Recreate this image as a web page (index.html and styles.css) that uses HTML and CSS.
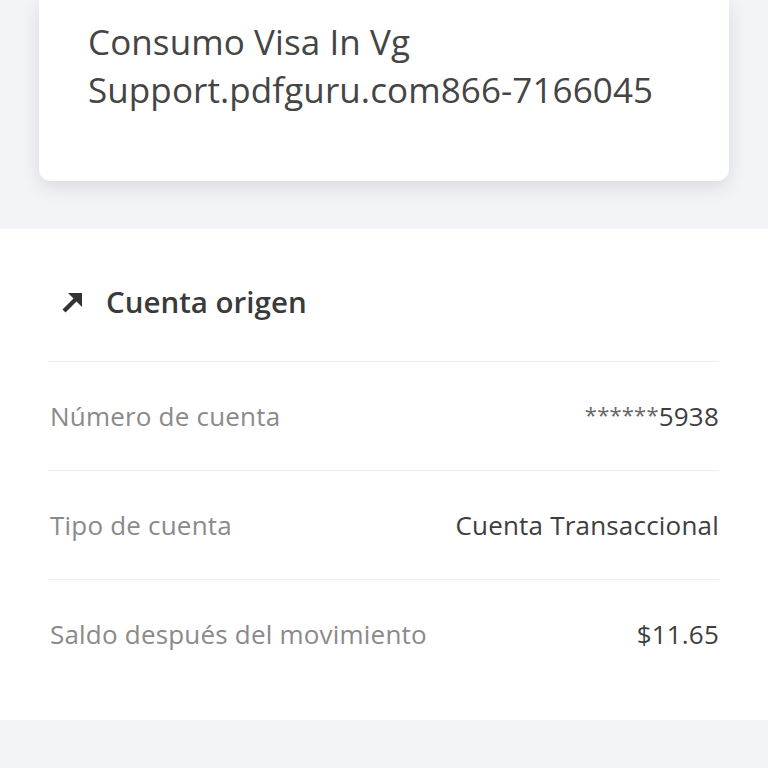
FILE: index.html
```html
<!DOCTYPE html>
<html lang="es">
<head>
<meta charset="UTF-8">
<meta name="viewport" content="width=device-width, initial-scale=1.0">
<title>Detalle de movimiento</title>
<link rel="stylesheet" href="styles.css">
</head>
<body>
<div class="card-wrap">
  <div class="card">
    <p class="card-line">Consumo Visa In Vg</p>
    <p class="card-line">Support.pdfguru.com866-7166045</p>
  </div>
</div>

<!-- Cuenta origen -->
<section class="detail">
  <div class="detail-title">
    <svg class="arrow-icon" viewBox="0 0 24 24" width="24" height="24">
      <path d="M3 21 L18 6" stroke="#333" stroke-width="4.2" fill="none"/>
      <path d="M7 3 H21 V17 Z" fill="#333"/>
    </svg>
    <h2>Cuenta origen</h2>
  </div>
  <div class="detail-row">
    <span class="row-label">Número de cuenta</span>
    <span class="row-value"><span class="stars">******</span>5938</span>
  </div>
  <div class="detail-row">
    <span class="row-label">Tipo de cuenta</span>
    <span class="row-value">Cuenta Transaccional</span>
  </div>
  <div class="detail-row last">
    <span class="row-label">Saldo después del movimiento</span>
    <span class="row-value">$11.65</span>
  </div>
</section>
</body>
</html>
```

FILE: styles.css
```css
:root {
  --page-bg: #f3f4f7;
  --text-dark: #3e3e3e;
  --text-grey: #8a8a8a;
  --line: #ececec;
}

body {
  margin: 0;
  padding: 0;
  background: var(--page-bg);
  font-family: "Open Sans", Roboto, "Liberation Sans", sans-serif;
  color: var(--text-dark);
}

.card-wrap {
  padding: 0 39px 48px;
}

.card {
  background: #fff;
  border-radius: 0 0 12px 12px;
  box-shadow: 0 6px 18px rgba(40, 45, 70, 0.12);
  padding: 18px 49px 67px;
}

.card-line {
  margin: 0;
  font-size: 35px;
  line-height: 48px;
  color: #454545;
  letter-spacing: 0.1px;
}

.detail {
  background: #fff;
  padding: 0 49px 0 48px;
}

.detail-title {
  display: flex;
  align-items: center;
  gap: 21px;
  padding: 50px 0 36px 13px;
  border-bottom: 1px solid var(--line);
}

.detail-title h2 {
  margin: 0;
  font-size: 29.5px;
  line-height: 46px;
  font-weight: 600;
  color: #3a3a3a;
}

.arrow-icon {
  display: block;
}

.detail-row {
  display: flex;
  justify-content: space-between;
  align-items: center;
  height: 108px;
  border-bottom: 1px solid var(--line);
  font-size: 26px;
  letter-spacing: 0.2px;
}

.detail-row.last {
  border-bottom: none;
  height: 108px;
  padding-bottom: 32px;
}

.row-label {
  color: var(--text-grey);
  padding-left: 2px;
}

.row-value {
  color: var(--text-dark);
}

.stars {
  font-size: 22px;
  color: #666;
  vertical-align: 3px;
}
```
